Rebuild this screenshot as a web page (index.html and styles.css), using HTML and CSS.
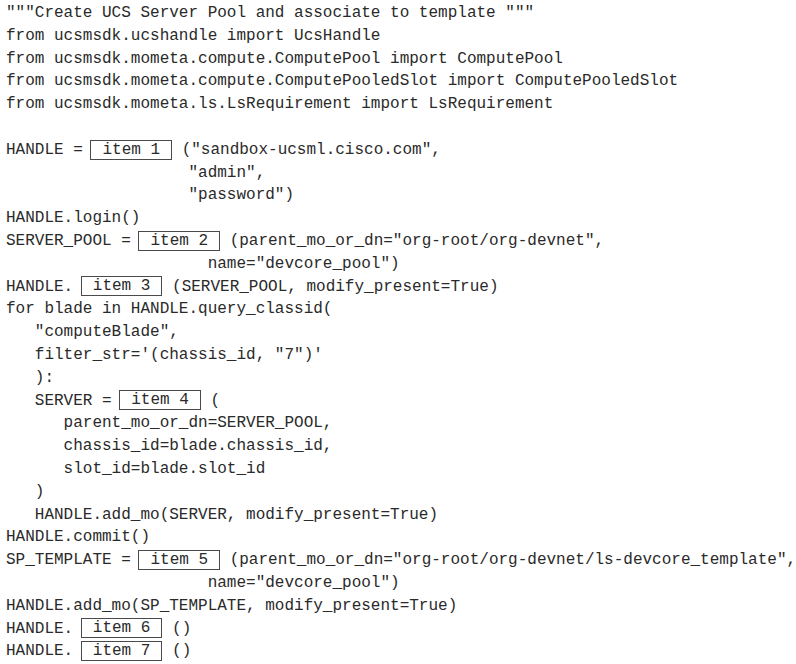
FILE: index.html
```html
<!DOCTYPE html>
<html>
<head>
<meta charset="utf-8">
<link rel="stylesheet" href="styles.css">
</head>
<body>
<div class="code">
<div class="ln">"""Create UCS Server Pool and associate to template """</div>
<div class="ln">from ucsmsdk.ucshandle import UcsHandle</div>
<div class="ln">from ucsmsdk.mometa.compute.ComputePool import ComputePool</div>
<div class="ln">from ucsmsdk.mometa.compute.ComputePooledSlot import ComputePooledSlot</div>
<div class="ln">from ucsmsdk.mometa.ls.LsRequirement import LsRequirement</div>
<div class="ln"> </div>
<div class="ln">HANDLE = <span class="box">item 1</span> ("sandbox-ucsml.cisco.com",</div>
<div class="ln">                   "admin",</div>
<div class="ln">                   "password")</div>
<div class="ln">HANDLE.login()</div>
<div class="ln">SERVER_POOL = <span class="box">item 2</span> (parent_mo_or_dn="org-root/org-devnet",</div>
<div class="ln">                     name="devcore_pool")</div>
<div class="ln">HANDLE. <span class="box">item 3</span> (SERVER_POOL, modify_present=True)</div>
<div class="ln">for blade in HANDLE.query_classid(</div>
<div class="ln">   "computeBlade",</div>
<div class="ln">   filter_str='(chassis_id, "7")'</div>
<div class="ln">   ):</div>
<div class="ln">   SERVER = <span class="box">item 4</span> (</div>
<div class="ln">      parent_mo_or_dn=SERVER_POOL,</div>
<div class="ln">      chassis_id=blade.chassis_id,</div>
<div class="ln">      slot_id=blade.slot_id</div>
<div class="ln">   )</div>
<div class="ln">   HANDLE.add_mo(SERVER, modify_present=True)</div>
<div class="ln">HANDLE.commit()</div>
<div class="ln">SP_TEMPLATE = <span class="box">item 5</span> (parent_mo_or_dn="org-root/org-devnet/ls-devcore_template",</div>
<div class="ln">                     name="devcore_pool")</div>
<div class="ln">HANDLE.add_mo(SP_TEMPLATE, modify_present=True)</div>
<div class="ln">HANDLE. <span class="box">item 6</span> ()</div>
<div class="ln">HANDLE. <span class="box">item 7</span> ()</div>
</div>
</body>
</html>
```
FILE: styles.css
```css
html, body {
  margin: 0;
  padding: 0;
  background: #ffffff;
}

.code {
  padding: 2px 0 0 6px;
  font-family: "Courier New", "Nimbus Mono PS", "Nimbus Mono L", "FreeMono", "Liberation Mono", monospace;
  font-size: 16px;
  line-height: 22.8px;
  color: #2a2a2a;
}

.ln {
  white-space: pre;
  height: 22.8px;
}

.box {
  display: inline-block;
  box-sizing: border-box;
  height: 20px;
  line-height: 18px;
  padding: 0 11px;
  margin-left: -2px;
  border: 1px solid #4a4a4a;
  vertical-align: middle;
}
```
